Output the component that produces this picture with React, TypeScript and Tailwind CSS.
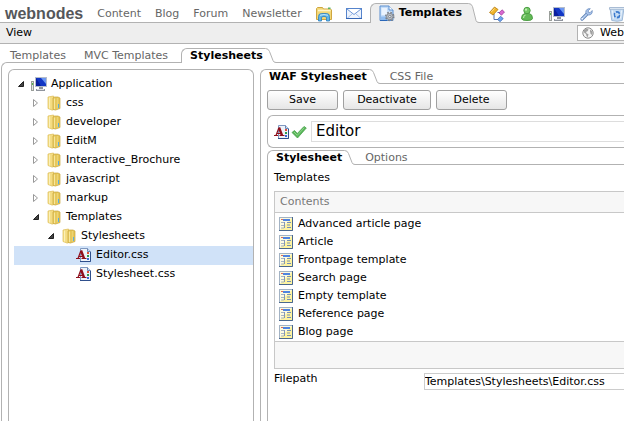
import { useState, type ReactNode } from "react";
import clsx from "clsx";

const templates = [
  "Advanced article page",
  "Article",
  "Frontpage template",
  "Search page",
  "Empty template",
  "Reference page",
  "Blog page",
];

type NodeIcon = "computer" | "folder" | "css";

interface TreeNode {
  name: string;
  icon: NodeIcon;
  level: number;
  open?: boolean;
}

const tree: TreeNode[] = [
  { name: "Application", icon: "computer", level: 0, open: true },
  { name: "css", icon: "folder", level: 1, open: false },
  { name: "developer", icon: "folder", level: 1, open: false },
  { name: "EditM", icon: "folder", level: 1, open: false },
  { name: "Interactive_Brochure", icon: "folder", level: 1, open: false },
  { name: "javascript", icon: "folder", level: 1, open: false },
  { name: "markup", icon: "folder", level: 1, open: false },
  { name: "Templates", icon: "folder", level: 1, open: true },
  { name: "Stylesheets", icon: "folder", level: 2, open: true },
  { name: "Editor.css", icon: "css", level: 3 },
  { name: "Stylesheet.css", icon: "css", level: 3 },
];

const indents = ["pl-0", "pl-[15px]", "pl-[30px]", "pl-[45px]"];

/* ---------- icons ---------- */

function Icon({ children }: { children: ReactNode }) {
  return (
    <svg width="16" height="16" viewBox="0 0 16 16" className="shrink-0" aria-hidden="true">
      {children}
    </svg>
  );
}

function ComputerIcon() {
  return (
    <Icon>
      <rect x="0.5" y="5.5" width="2" height="9" fill="#e4e6e4" stroke="#9a9e9a" />
      <rect x="1" y="7" width="1" height="2" fill="#54b948" />
      <rect x="4" y="1" width="12" height="10" fill="#b4bccb" />
      <rect x="5" y="2" width="10" height="8" fill="#1236c4" />
      <path d="M10 2h5v6z" fill="#6c97f2" />
      <path d="M5 2l5 8H5z" fill="#0a1f9c" />
      <path d="M8 11h4v2h2v2H5v-2h3z" fill="#8f949d" />
      <path d="M6 13h7v1H6z" fill="#dcdfe4" />
    </Icon>
  );
}

function FolderIcon() {
  return (
    <Icon>
      <path d="M2 2l5.5-1v13l-1 1.2L2 13.5z" fill="#f4dc82" stroke="#dcbc55" strokeWidth="0.7" />
      <path d="M3.5 2.5v11" stroke="#fbf0b8" strokeWidth="1.2" />
      <path d="M7 3l1.5-1H12l2 1v10.5L9.5 15 7 14.5z" fill="#e4c557" stroke="#c9a63c" strokeWidth="0.7" />
      <path d="M8.5 3.5V14" stroke="#f7e69c" strokeWidth="1.2" />
      <path d="M11.5 3v10.5" stroke="#edd474" strokeWidth="1.4" />
      <rect x="12" y="9" width="1" height="4" fill="#58aee0" />
    </Icon>
  );
}

function CssIcon() {
  return (
    <Icon>
      <path d="M4.5 1.5h7l3 3v10h-10z" fill="#eef3fa" stroke="#7f98c0" />
      <path d="M11.5 1.5v3h3" fill="#cbdaf0" stroke="#6a86b4" />
      <path d="M4 14.5h10.5V5" fill="none" stroke="#2f4f8c" />
      <rect x="11" y="5" width="2" height="2" fill="#e05038" />
      <rect x="11" y="8" width="2" height="2" fill="#2d9b4e" />
      <rect x="11" y="11" width="2" height="2" fill="#3b67d6" />
      {/* serif letter built from strokes */}
      <path d="M5 3.5l3 8" stroke="#8e0f1c" strokeWidth="2.4" />
      <path d="M4.800 4L2 11.500M3 9.500h4.500" fill="none" stroke="#8e0f1c" strokeWidth="1.2" />
      <path d="M0 11.500h4M5.500 11.500h5" stroke="#8e0f1c" />
    </Icon>
  );
}

function ExplorerIcon() {
  return (
    <Icon>
      <path d="M0.5 2.5l1-1h5l1 1.5h7l1 1v9.5h-15z" fill="#f2d777" stroke="#cfa640" />
      <path d="M2 4.5h12.5" stroke="#fff5c8" strokeWidth="1.6" />
      <rect x="12" y="1.5" width="2.5" height="1.6" fill="#5bb266" />
      <path d="M2.5 15V10.5a3 3 0 013-3h5a3 3 0 013 3V15h-3v-3a1.5 1.5 0 00-1.500-1.500H7A1.500 1.500 0 005.500 12v3z" fill="#5db5e8" stroke="#2b7fc0" strokeWidth="0.8" />
      <path d="M4 9.300q4-1.500 8 0" stroke="#c5e9fb" fill="none" />
    </Icon>
  );
}

function MailIcon() {
  return (
    <Icon>
      <rect x="0.5" y="2.5" width="15" height="10" fill="#eef4fd" stroke="#5684cc" />
      <path d="M1 12.500l5.500-5M15 12.500L9.500 7.500" stroke="#a6c0ea" />
      <path d="M1 3l7 5.500L15 3" fill="#fff" stroke="#6d97d8" />
      <path d="M0 12.500h16" stroke="#3465b4" />
    </Icon>
  );
}

function PageGearIcon() {
  return (
    <svg width="16" height="17" viewBox="0 0 16 17" className="shrink-0" aria-hidden="true">
      <path d="M1 1h9l4 4v10.5H1z" fill="#c4dcf8" stroke="#5b8fd0" />
      <path d="M2 11.500h8V15H2z" fill="#8fbcf0" />
      <path d="M2.500 3h5.500v4h4v3H2.500z" fill="#eaf3fe" />
      <path d="M10 1v4h4" fill="#fff" stroke="#5b8fd0" />
      <path d="M1 15.500h7" stroke="#2a67b8" />
      <circle cx="10.800" cy="11.500" r="4" fill="none" stroke="#7b8088" strokeWidth="1.6" strokeDasharray="1.7 1.44" />
      <circle cx="10.800" cy="11.500" r="3.200" fill="#bcc1c8" stroke="#858b93" />
      <circle cx="10.800" cy="11.500" r="1.200" fill="#eef2f6" stroke="#5d636b" strokeWidth="0.7" />
    </svg>
  );
}

function ClassesIcon() {
  return (
    <Icon>
      <path d="M5 8v5.500h4M8.500 6.500h3" fill="none" stroke="#5b73a8" />
      <path d="M0.500 6.500L5.500 1 9 3.500 4 9z" fill="#f0b429" stroke="#b47a10" strokeWidth="0.8" />
      <path d="M2.300 6l3.500-3.700" stroke="#ffe08a" />
      <path d="M10 7l3-3.200L15.500 6l-3 3.200z" fill="#d968d0" stroke="#963092" strokeWidth="0.7" />
      <path d="M8.500 13.500l3-3.200 2.700 2.200-3 3.200z" fill="#6fa5ee" stroke="#2b5cac" strokeWidth="0.7" />
    </Icon>
  );
}

function UserIcon() {
  return (
    <Icon>
      <path d="M2.500 12.500q0-4.500 3.500-5h4q3.500.5 3.500 5 0 2-5.500 2t-5.500-2z" fill="#62b956" stroke="#4d9e45" />
      <path d="M4.500 12q0-2.500 2-3" stroke="#b8e8aa" strokeWidth="1.2" fill="none" />
      <circle cx="8" cy="4.500" r="3.200" fill="#74c866" stroke="#4d9e45" />
      <circle cx="7" cy="3.700" r="1.100" fill="#c3efb6" />
    </Icon>
  );
}

function WrenchIcon() {
  return (
    <Icon>
      <path d="M3 13l5-5" stroke="#5e83b8" strokeWidth="3.2" strokeLinecap="round" />
      <path d="M3 13l5-5" stroke="#bcd2f0" strokeWidth="1.6" strokeLinecap="round" />
      <path d="M11.300 2.700L9.200 4.800l.3 1.600 1.600.3 2.100-2.200q.6 3.300-2 4.300-2 .7-3.400-.6-1.600-1.600-.8-3.500 1.200-2.500 4.300-2z" fill="#a9c3ea" stroke="#6d8fc0" strokeWidth="0.8" />
      <circle cx="3.200" cy="12.800" r="0.800" fill="#fff" />
    </Icon>
  );
}

function RecycleIcon() {
  return (
    <Icon>
      <path d="M1 2h14l-1.800 12.500q-5 1.500-10.400 0z" fill="#c5dcf3" stroke="#9db8d6" />
      <path d="M0.500 1.500h15v1.800h-15z" fill="#e6eff9" stroke="#93abc7" strokeWidth="0.7" />
      <circle cx="8" cy="8.700" r="2.800" fill="none" stroke="#3979cd" strokeWidth="1.8" strokeDasharray="4.4 1.46" />
      <path d="M3.500 4.500l1 8M12.500 4.500l-1 8" stroke="#f1f7fd" />
    </Icon>
  );
}

function GlobeIcon() {
  return (
    <svg width="12" height="12" viewBox="0 0 12 12" className="shrink-0" aria-hidden="true">
      <circle cx="6" cy="6" r="5.200" fill="#f4f4f4" stroke="#8a8a8a" />
      <path d="M2 3l2.500-1.500 2 .8L5.800 4 4 5l.8 1.500 1.700.8-.8 3L4.500 9 4 7 2 5.500z" fill="#a2a2a2" />
      <path d="M8 2.500l2 1.500.6 2-.8 2-1.300-1.500L8 4.500z" fill="#a2a2a2" />
    </svg>
  );
}

function CheckIcon() {
  return (
    <Icon>
      <path d="M1 8.500l2.500-2 2.800 3L13 2.500 15.300 4 6.500 14z" fill="#57b558" stroke="#4aa34c" strokeWidth="0.8" />
      <path d="M3 8l3.300 3.300 7-7.600" fill="none" stroke="#8fd58b" />
    </Icon>
  );
}

function TemplateIcon() {
  return (
    <svg width="14" height="14" viewBox="0 0 14 14" className="shrink-0" aria-hidden="true">
      <rect x="0.5" y="0.5" width="13" height="13" fill="#fdf3a0" stroke="#a3b3c4" />
      <path d="M1 1h12L1 13z" fill="#fcfae0" />
      <path d="M0 13.500h13.500V0" fill="none" stroke="#4a688e" />
      <path d="M4 3h7" stroke="#4f84e0" strokeWidth="2" />
      <rect x="2" y="2" width="2" height="1" fill="#dd6a5c" />
      <path d="M2 5.500h3M2 8.500h3M2 11h3" stroke="#a4b4c8" />
      <path d="M5.500 5v6" stroke="#8398b4" />
      <path d="M8 5.500h4M8 8h3M8 10.500h4" stroke="#7590b8" />
    </svg>
  );
}

function Arrow({ open }: { open: boolean }) {
  return (
    <svg width="8" height="10" viewBox="0 0 8 10" className="shrink-0" aria-hidden="true">
      {open ? (
        <path d="M6.500 2.500v5h-5z" fill="#444" stroke="#222" strokeLinejoin="round" />
      ) : (
        <path d="M1.500 1.500l4 3.500-4 3.500z" fill="#fff" stroke="#999" />
      )}
    </svg>
  );
}

/* ---------- tabs ---------- */

// Slanted right edge of the selected tab
function TabEdge({ height, fill }: { height: number; fill: string }) {
  return (
    <svg width="11" height={height} viewBox={`0 0 11 ${height}`} className="shrink-0" aria-hidden="true">
      <path
        d={`M0 0.500h0.500q3 0 4 3L8 ${height - 2.5}q.6 2 3 2V${height}H0z`}
        fill={fill}
      />
      <path d={`M0 0.500h0.500q3 0 4 3L8 ${height - 2.5}q.6 2 3 2`} fill="none" stroke="#b2b2b2" />
    </svg>
  );
}

function PanelTabs({ active, other }: { active: string; other: string }) {
  return (
    <div className="relative -mb-px flex h-[15px] leading-[14px]">
      <button type="button" className="rounded-tl-md border-t border-l border-[#b2b2b2] bg-white pr-0.5 pl-2 font-bold">
        {active}
      </button>
      <TabEdge height={15} fill="#fff" />
      <button type="button" className="ml-2.5 text-[#666]">
        {other}
      </button>
    </div>
  );
}

function TopLink({ children, label }: { children: ReactNode; label?: string }) {
  return (
    <a href="#" aria-label={label} className="shrink-0 text-[#666]">
      {children}
    </a>
  );
}

function ToolButton({ children, wide }: { children: ReactNode; wide?: boolean }) {
  return (
    <button
      type="button"
      className={clsx(
        "h-5 rounded-[3px] border border-[#a0a0a0] bg-linear-to-b from-white to-[#e6e6e6]",
        wide ? "w-[88px]" : "w-[71px]"
      )}
    >
      {children}
    </button>
  );
}

export default function App() {
  const [selected, setSelected] = useState("Editor.css");
  const [title, setTitle] = useState("Editor");
  const [filepath, setFilepath] = useState("Templates\\Stylesheets\\Editor.css");

  return (
    <div className="flex h-screen flex-col overflow-hidden bg-white font-['DejaVu_Sans',Verdana,sans-serif] text-[11px] text-black">
      {/* Top navigation */}
      <header className="relative -mb-px flex h-[23px] shrink-0 items-end">
        <nav className="flex h-[22px] shrink-0 items-center gap-[14px] pt-1 pl-[5px]">
          <a href="#" className="font-['Liberation_Sans',Arial,sans-serif] text-[16px] leading-4 font-bold text-[#55575a]">
            webnodes
          </a>
          <TopLink>Content</TopLink>
          <TopLink>Blog</TopLink>
          <TopLink>Forum</TopLink>
          <TopLink>Newsletter</TopLink>
          <TopLink label="Explorer"><ExplorerIcon /></TopLink>
          <TopLink label="Mail"><MailIcon /></TopLink>
        </nav>
        <div className="ml-2 flex h-5 shrink-0">
          <button
            type="button"
            className="flex items-center gap-1 rounded-tl-md border-t border-l border-[#b2b2b2] bg-[#eee] pr-1.5 pl-2 font-bold"
          >
            <PageGearIcon />
            Templates
          </button>
          <TabEdge height={20} fill="#eee" />
        </div>
        <nav className="ml-2.5 flex h-[22px] items-center gap-[14px] pt-1">
          <TopLink label="Classes"><ClassesIcon /></TopLink>
          <TopLink label="Users"><UserIcon /></TopLink>
          <TopLink label="System"><ComputerIcon /></TopLink>
          <TopLink label="Settings"><WrenchIcon /></TopLink>
          <TopLink label="Recycle bin"><RecycleIcon /></TopLink>
        </nav>
      </header>

      {/* Menu bar */}
      <div className="flex h-[22px] shrink-0 items-center justify-between border-y border-[#b2b2b2] bg-[#eee] pl-1.5">
        <button type="button">View</button>
        <button type="button" className="flex h-4 w-[47px] items-center gap-1.5 overflow-hidden border border-r-0 border-[#b2b2b2] bg-white pl-1">
          <GlobeIcon />
          Web
        </button>
      </div>

      {/* Section tabs */}
      <div className="relative -mb-px flex h-[19px] shrink-0 items-end pl-2.5">
        <button type="button" className="mr-[18px] h-[15px] leading-[14px] text-[#666]">Templates</button>
        <button type="button" className="mr-[13px] h-[15px] leading-[14px] text-[#666]">MVC Templates</button>
        <button
          type="button"
          className="h-[15px] rounded-tl-md border-t border-l border-[#b2b2b2] bg-white pr-0.5 pl-2 leading-[14px] font-bold"
        >
          Stylesheets
        </button>
        <TabEdge height={15} fill="#fff" />
      </div>

      <main className="ml-px flex min-h-0 flex-1 gap-1.5 rounded-tl-md border-t border-l border-[#b2b2b2] pt-1.5 pl-1.5">
        {/* File tree */}
        <ul className="w-[246px] shrink-0 rounded-t-md border border-b-0 border-[#b2b2b2] pt-[5px] pl-[5px]">
          {tree.map((node) => (
            <li key={node.name} className={node.name === selected ? "bg-[#d0e2f8]" : ""}>
              <button
                type="button"
                onClick={() => setSelected(node.name)}
                className={clsx("flex h-[19px] w-full items-center pb-px text-left", indents[node.level])}
              >
                <span className="flex w-[17px] pl-[3px]">
                  {node.open !== undefined && <Arrow open={node.open} />}
                </span>
                {node.icon === "computer" && <ComputerIcon />}
                {node.icon === "folder" && <FolderIcon />}
                {node.icon === "css" && <CssIcon />}
                <span className="pl-1">{node.name}</span>
              </button>
            </li>
          ))}
        </ul>

        {/* Editor */}
        <section className="flex min-w-0 flex-1 flex-col">
          <PanelTabs active="WAF Stylesheet" other="CSS File" />
          <div className="flex flex-1 flex-col border-t border-l border-[#b2b2b2] pt-1.5 pl-1.5">
            <div className="flex gap-[5px]">
              <ToolButton>Save</ToolButton>
              <ToolButton wide>Deactivate</ToolButton>
              <ToolButton>Delete</ToolButton>
            </div>

            <div className="mt-[5px] flex h-[33px] items-center gap-px rounded-l-md border border-r-0 border-[#b2b2b2] pl-1.5">
              <CssIcon />
              <CheckIcon />
              <input
                aria-label="Name"
                value={title}
                onChange={(e) => setTitle(e.target.value)}
                className="ml-[3px] h-[21px] min-w-0 flex-1 border border-r-0 border-[#ddd] pl-1 text-[15px] outline-none"
              />
            </div>

            <div className="mt-0.5 flex flex-1 flex-col">
              <PanelTabs active="Stylesheet" other="Options" />
              <div className="flex-1 border-t border-l border-[#b2b2b2] pt-1.5 pl-1.5">
                <h2 className="h-5 leading-[14px]">Templates</h2>
                <div className="border border-r-0 border-[#c8c8c8]">
                  <table className="w-full border-separate border-spacing-0">
                    <thead>
                      <tr>
                        <th className="h-[21px] border-b border-[#c8c8c8] bg-[#f7f7f7] p-0 pl-[5px] text-left leading-4 font-normal text-[#777]">
                          Contents
                        </th>
                      </tr>
                    </thead>
                    <tbody>
                      {templates.map((name) => (
                        <tr key={name}>
                          <td className="h-[18px] p-0 pl-1 align-bottom">
                            <a href="#" className="flex items-center gap-[5px] leading-[14px]">
                              <TemplateIcon />
                              {name}
                            </a>
                          </td>
                        </tr>
                      ))}
                    </tbody>
                  </table>
                  <div className="mt-0.5 h-[27px] border-t border-[#c8c8c8] bg-[#f7f7f7]" />
                </div>
                <div className="mt-1 flex">
                  <label htmlFor="filepath" className="w-[150px] leading-[12px]">Filepath</label>
                  <input
                    id="filepath"
                    value={filepath}
                    onChange={(e) => setFilepath(e.target.value)}
                    className="h-[17px] min-w-0 flex-1 border border-r-0 border-[#ccc] outline-none"
                  />
                </div>
              </div>
            </div>
          </div>
        </section>
      </main>
    </div>
  );
}
